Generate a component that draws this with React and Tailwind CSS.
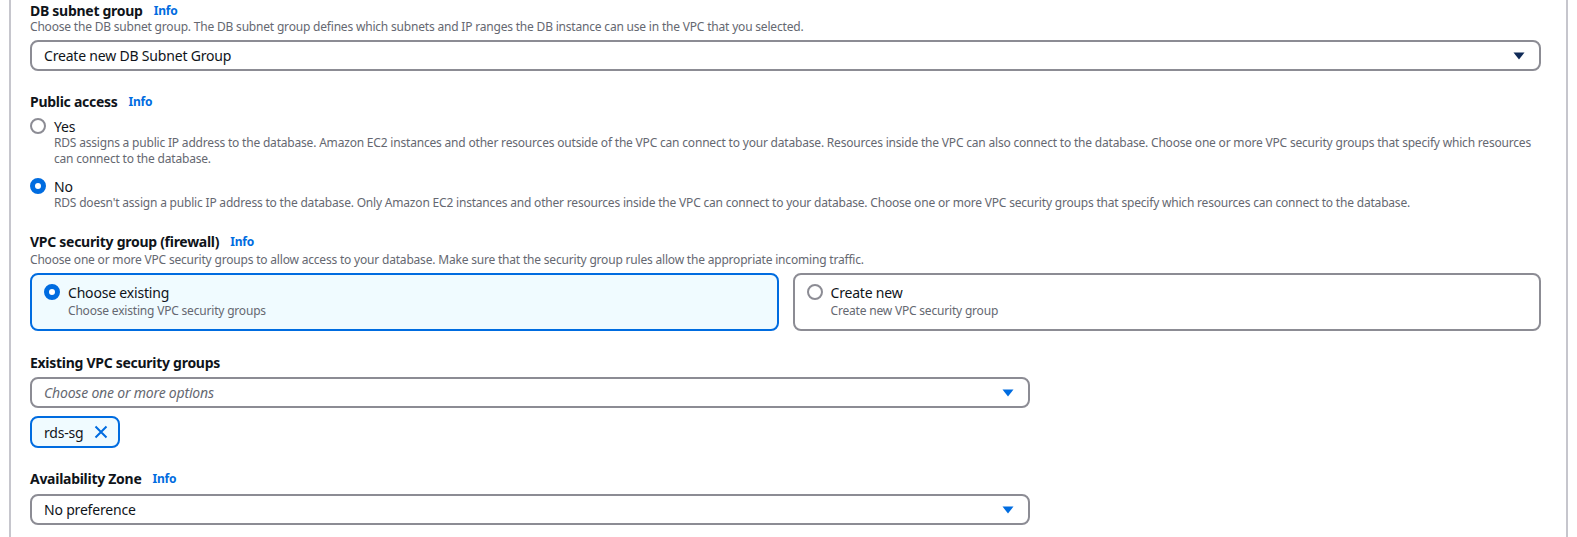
import React from 'react';

const font = { fontFamily: '"Noto Sans", "Open Sans", Arial, sans-serif', letterSpacing: '-0.012em' };

function Caret({ dark = false }) {
  return (
    <svg width="12" height="8" viewBox="0 0 12 8" className="shrink-0">
      <path d="M0.5 0.5 L11.5 0.5 L6 7.5 Z" fill={dark ? '#0f2a57' : '#006ce0'} />
    </svg>
  );
}

function Radio({ checked }) {
  if (checked) {
    return <span className="block w-4 h-4 rounded-full border-[5px] border-[#006ce0] bg-white shrink-0" />;
  }
  return <span className="block w-4 h-4 rounded-full border-2 border-[#8c8c94] bg-white shrink-0" />;
}

function Label({ children, info }) {
  return (
    <div className="flex items-center gap-[11px] text-[14px] leading-[18px] font-bold text-[#0f141a]">
      <span className="tracking-[-0.02em]">{children}</span>
      {info && <span className="text-[12px] font-bold text-[#006ce0]">Info</span>}
    </div>
  );
}

function Select({ value, width = 'w-full', dark, placeholder }) {
  return (
    <div className={`${width} h-[31px] border-2 border-[#8c8c94] rounded-lg flex items-center justify-between pl-[12px] pr-[14px]`}>
      <span className={placeholder ? 'text-[14px] italic text-[#656871]' : 'text-[14px] text-[#0f141a]'}>{value}</span>
      <Caret dark={dark} />
    </div>
  );
}

export default function App() {
  return (
    <div className="bg-white w-[1577px] h-[537px] overflow-hidden" style={font}>
      <div className="ml-[9px] w-[1559px] h-full border-l-2 border-r-2 border-[#c6c6cd] pl-[19px] pr-[25px] pt-[2px]">
        {/* DB subnet group */}
        <Label info>DB subnet group</Label>
        <p className="text-[12px] leading-[16px] text-[#656871] mt-[-1px]">
          Choose the DB subnet group. The DB subnet group defines which subnets and IP ranges the DB instance can use in the VPC that you selected.
        </p>
        <div className="mt-[5px]">
          <Select value="Create new DB Subnet Group" dark />
        </div>

        {/* Public access */}
        <div className="mt-[22px]">
          <Label info>Public access</Label>
        </div>
        <div className="mt-[5px] flex items-center gap-[8px] h-[20px]">
          <Radio />
          <span className="text-[14px] text-[#0f141a]">Yes</span>
        </div>
        <p className="ml-[24px] mt-[-1px] text-[12px] leading-[16px] text-[#656871]">
          RDS assigns a public IP address to the database. Amazon EC2 instances and other resources outside of the VPC can connect to your database. Resources inside the VPC can also connect to the database. Choose one or more VPC security groups that specify which resources can connect to the database.
        </p>
        <div className="mt-[9px] flex items-center gap-[8px] h-[20px]">
          <Radio checked />
          <span className="text-[14px] text-[#0f141a]">No</span>
        </div>
        <p className="ml-[24px] mt-[-1px] text-[12px] leading-[16px] text-[#656871]">
          RDS doesn't assign a public IP address to the database. Only Amazon EC2 instances and other resources inside the VPC can connect to your database. Choose one or more VPC security groups that specify which resources can connect to the database.
        </p>

        {/* VPC security group */}
        <div className="mt-[22px]">
          <Label info>VPC security group (firewall)</Label>
        </div>
        <p className="text-[12px] leading-[16px] text-[#656871] mt-[1px]">
          Choose one or more VPC security groups to allow access to your database. Make sure that the security group rules allow the appropriate incoming traffic.
        </p>
        <div className="mt-[5px] grid grid-cols-2 gap-[14px]">
          <div className="h-[58px] border-2 border-[#006ce0] bg-[#f0fbff] rounded-lg px-[12px] pt-[7px]">
            <div className="flex items-center gap-[8px] h-[20px]">
              <Radio checked />
              <span className="text-[14px] text-[#0f141a]">Choose existing</span>
            </div>
            <p className="ml-[24px] text-[12px] leading-[16px] text-[#656871] mt-[1px]">Choose existing VPC security groups</p>
          </div>
          <div className="h-[58px] border-2 border-[#8c8c94] bg-white rounded-lg px-[12px] pt-[7px]">
            <div className="flex items-center gap-[8px] h-[20px]">
              <Radio />
              <span className="text-[14px] text-[#0f141a]">Create new</span>
            </div>
            <p className="ml-[24px] text-[12px] leading-[16px] text-[#656871] mt-[1px]">Create new VPC security group</p>
          </div>
        </div>

        {/* Existing VPC security groups */}
        <div className="mt-[23px]">
          <Label>Existing VPC security groups</Label>
        </div>
        <div className="mt-[5px]">
          <Select value="Choose one or more options" width="w-[1000px]" placeholder />
        </div>
        <div className="mt-[8px] inline-flex items-center gap-[10px] h-[32px] border-2 border-[#006ce0] bg-[#f0fbff] rounded-lg pl-[12px] pr-[10px]">
          <span className="text-[14px] text-[#0f141a]">rds-sg</span>
          <svg width="14" height="14" viewBox="0 0 14 14">
            <path d="M1.5 1.5 L12.5 12.5 M12.5 1.5 L1.5 12.5" stroke="#006ce0" strokeWidth="2" fill="none" />
          </svg>
        </div>

        {/* Availability Zone */}
        <div className="mt-[22px]">
          <Label info>Availability Zone</Label>
        </div>
        <div className="mt-[6px]">
          <Select value="No preference" width="w-[1000px]" />
        </div>
      </div>
    </div>
  );
}
